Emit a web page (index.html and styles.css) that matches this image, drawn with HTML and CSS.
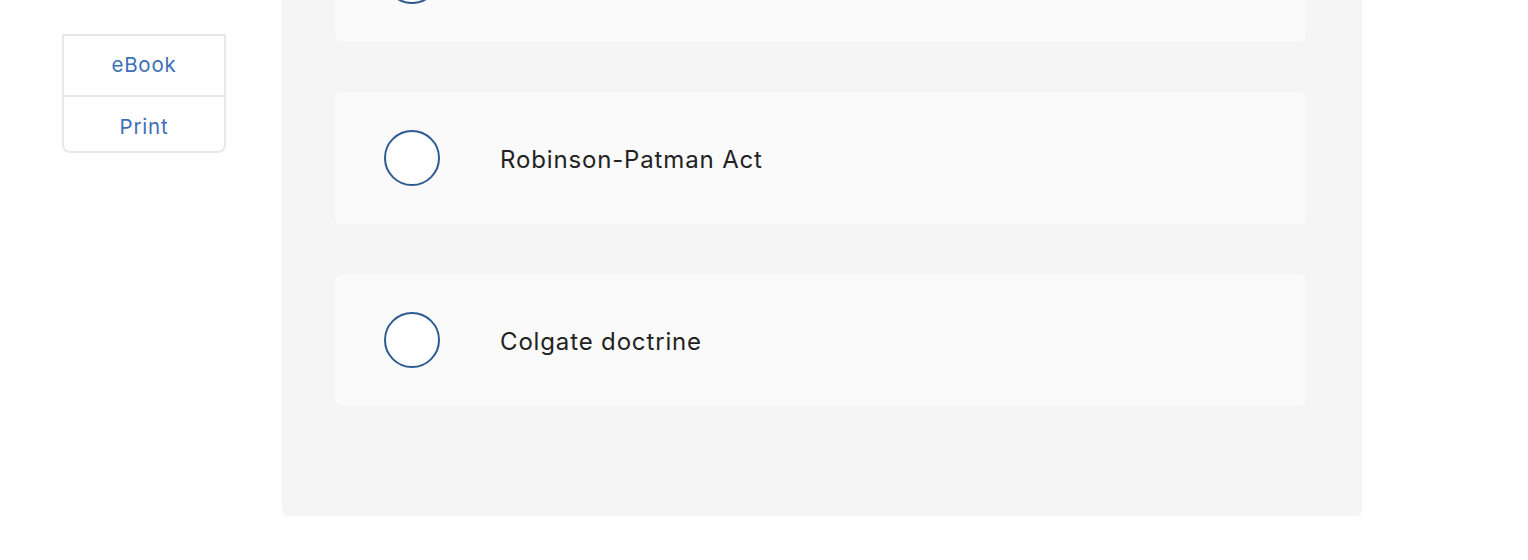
FILE: index.html
```html
<!DOCTYPE html>
<html>
<head>
<meta charset="utf-8">
<link rel="stylesheet" href="styles.css">
</head>
<body>
<div class="page">
  <aside class="sidebar">
    <div class="side-box">
      <a class="side-link">eBook</a>
      <a class="side-link">Print</a>
    </div>
  </aside>
  <main class="panel">
    <div class="option">
      <span class="radio"></span>
    </div>
    <div class="option">
      <span class="radio"></span>
      <span class="label">Robinson-Patman Act</span>
    </div>
    <div class="option">
      <span class="radio"></span>
      <span class="label">Colgate doctrine</span>
    </div>
  </main>
</div>
</body>
</html>
```
FILE: styles.css
```css
html, body {
  margin: 0;
  padding: 0;
  background: #ffffff;
  overflow: hidden;
}
body {
  font-family: "Inter", "Open Sans", sans-serif;
}
.page {
  display: flex;
  align-items: flex-start;
  padding-left: 62px;
}
.sidebar {
  width: 164px;
  margin-top: 34px;
  margin-right: 56px;
}
.side-box {
  display: flex;
  flex-direction: column;
  border: 2px solid #e8e8e8;
  border-radius: 0 0 8px 8px;
}
.side-link {
  display: flex;
  align-items: center;
  justify-content: center;
  height: 59px;
  padding-bottom: 2px;
  box-sizing: border-box;
  font-size: 20.5px;
  letter-spacing: 0.8px;
  color: #3d6fb6;
  cursor: pointer;
}
.side-link + .side-link {
  border-top: 2px solid #e8e8e8;
  height: 56px;
  padding-bottom: 0;
  padding-top: 4px;
}
.panel {
  width: 1080px;
  margin-top: -140px;
  padding: 50px 56px 110px 53px;
  box-sizing: border-box;
  background: #f5f5f5;
  border-radius: 6px;
  display: flex;
  flex-direction: column;
  gap: 50px;
}
.option {
  height: 132px;
  background: #fafafa;
  border-radius: 6px;
  display: flex;
  align-items: center;
  padding-left: 49px;
}
.radio {
  width: 52px;
  height: 52px;
  border: 2px solid #2f5b93;
  border-radius: 50%;
  background: #ffffff;
  flex: none;
}
.label {
  margin-left: 60px;
  font-size: 24px;
  letter-spacing: 0.85px;
  color: #222222;
  padding-top: 2px;
}
```
